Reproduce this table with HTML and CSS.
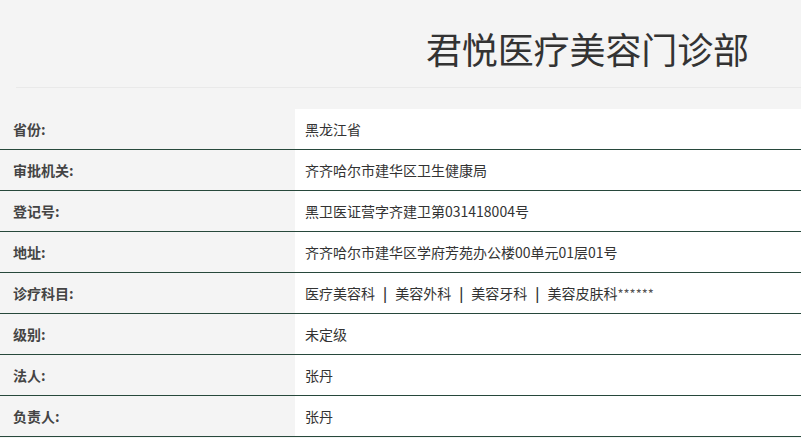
FILE: index.html
```html
<!DOCTYPE html>
<html lang="zh-CN">
<head>
<meta charset="utf-8">
<title>君悦医疗美容门诊部</title>
<link rel="stylesheet" href="styles.css">
</head>
<body>
<div class="page">
  <header class="head">
    <h1 class="title">君悦医疗美容门诊部</h1>
  </header>
  <div class="info">
    <div class="row"><div class="label">省份:</div><div class="value">黑龙江省</div></div>
    <div class="row"><div class="label">审批机关:</div><div class="value">齐齐哈尔市建华区卫生健康局</div></div>
    <div class="row"><div class="label">登记号:</div><div class="value">黑卫医证营字齐建卫第031418004号</div></div>
    <div class="row"><div class="label">地址:</div><div class="value">齐齐哈尔市建华区学府芳苑办公楼00单元01层01号</div></div>
    <div class="row"><div class="label">诊疗科目:</div><div class="value">医疗美容科<span class="sep">|</span>美容外科<span class="sep">|</span>美容牙科<span class="sep">|</span>美容皮肤科<span class="stars">******</span></div></div>
    <div class="row"><div class="label">级别:</div><div class="value">未定级</div></div>
    <div class="row"><div class="label">法人:</div><div class="value">张丹</div></div>
    <div class="row"><div class="label">负责人:</div><div class="value">张丹</div></div>
  </div>
</div>
</body>
</html>
```
FILE: styles.css
```css
html, body {
  margin: 0;
  padding: 0;
  background: #f4f4f4;
}
body {
  font-family: "Noto Sans CJK SC", "Noto Sans", sans-serif;
  color: #333;
  width: 801px;
  height: 438px;
  overflow: hidden;
}
.head {
  margin-left: 16px;
  border-bottom: 1px solid #e9e9e9;
  height: 88px;
  box-sizing: border-box;
  display: flex;
  justify-content: flex-end;
}
.title {
  margin: 0;
  padding: 30px 52px 0 0;
  font-size: 36px;
  line-height: 36px;
  font-weight: normal;
  color: #333;
  letter-spacing: -0.1px;
}
.info {
  margin-top: 21px;
}
.row {
  display: grid;
  grid-template-columns: 295px 1fr;
  height: 41px;
  box-sizing: border-box;
  border-bottom: 1px solid #27483b;
  font-size: 14px;
  line-height: 40px;
}
.label {
  padding-left: 13px;
  font-weight: bold;
  color: #444;
}
.value {
  background: #fff;
  padding-left: 10px;
  color: #333;
  height: 40px;
  overflow: hidden;
}
.sep {
  font-weight: bold;
  color: #333;
  margin: 0 8px;
}
.stars {
  color: #555;
  font-size: 13px;
  line-height: 1;
}
```
